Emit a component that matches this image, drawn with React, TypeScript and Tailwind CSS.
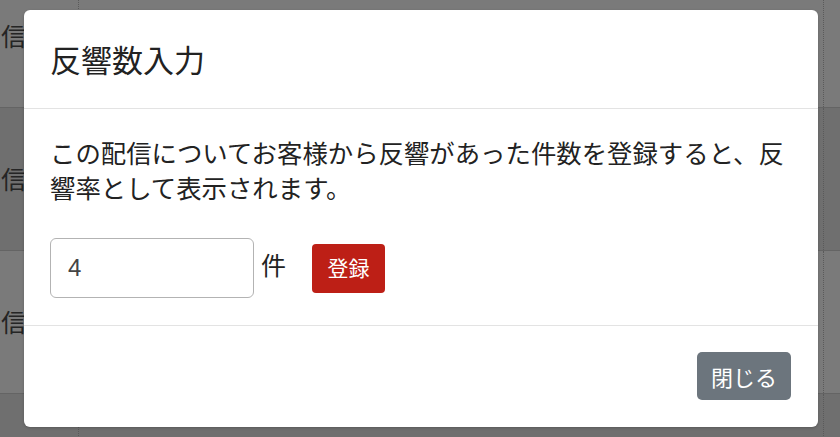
import React from "react";

const font = { fontFamily: '"Noto Sans CJK JP", "Noto Sans", sans-serif' };

function BackgroundRow({ dark, label = true }: { dark: boolean; label?: boolean }) {
  return (
    <div
      className={`grid h-[143px] grid-cols-[79px_744px_1fr] border-b border-[#646464] ${
        dark ? "bg-[#6f6f6f]" : "bg-[#7a7a7a]"
      }`}
    >
      <div className="flex items-center border-r border-dotted border-[#5a5a5a] pl-[1px] text-[25px] text-[#252525]">
        {label ? "信" : null}
      </div>
      <div />
      <div className="border-l border-dotted border-[#5a5a5a]" />
    </div>
  );
}

export default function App() {
  return (
    <div className="relative h-[437px] w-[840px] overflow-hidden bg-[#7a7a7a]" style={font}>
      {/* dimmed table behind the dialog */}
      <div className="-mt-[35px]">
        <BackgroundRow dark={false} />
        <BackgroundRow dark={true} />
        <BackgroundRow dark={false} />
        <BackgroundRow dark={true} label={false} />
      </div>

      {/* modal */}
      <div className="absolute left-[24px] top-[10px] flex h-[417px] w-[794px] flex-col rounded-[6px] bg-white shadow-[0_1px_3px_rgba(0,0,0,0.2)]">
        <div className="border-b border-[#e3e3e3] px-[26px] py-[25px]">
          <h5 className="text-[31px] leading-[48px] text-[#222]">反響数入力</h5>
        </div>

        <div className="px-[26px] pb-[26px] pt-[26px]">
          <p className="text-[25.4px] leading-[35px] text-[#222]">
            この配信についてお客様から反響があった件数を登録すると、反響率として表示されます。
          </p>
          <div className="mt-[33px] flex items-center">
            <input
              type="text"
              defaultValue="4"
              className="h-[60px] w-[204px] rounded-[6px] border border-[#b3b3b3] px-[17px] text-[24px] text-[#444] outline-none"
              style={{ fontFamily: '"Liberation Sans", "Noto Sans CJK JP", sans-serif' }}
            />
            <span className="mb-[6px] ml-[7px] text-[25px] text-[#222]">件</span>
            <button
              type="button"
              className="ml-[26px] flex h-[49px] w-[73px] items-center justify-center rounded-[4px] bg-[#bd1f16] text-[21px] text-white"
              style={font}
            >
              登録
            </button>
          </div>
        </div>

        <div className="mt-auto flex justify-end border-t border-[#e3e3e3] px-[27px] pb-[27px] pt-[26px]">
          <button
            type="button"
            className="flex h-[48px] w-[94px] items-center justify-center rounded-[5px] bg-[#6c757d] text-[22px] text-white"
            style={font}
          >
            閉じる
          </button>
        </div>
      </div>
    </div>
  );
}
